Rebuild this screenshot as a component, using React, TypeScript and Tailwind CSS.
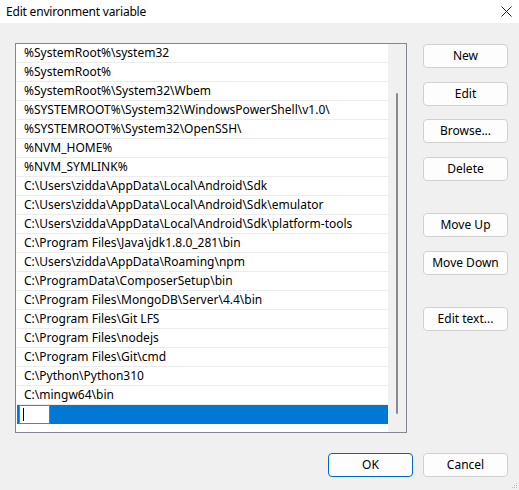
import React from "react";

const items = [
  "%SystemRoot%\\system32",
  "%SystemRoot%",
  "%SystemRoot%\\System32\\Wbem",
  "%SYSTEMROOT%\\System32\\WindowsPowerShell\\v1.0\\",
  "%SYSTEMROOT%\\System32\\OpenSSH\\",
  "%NVM_HOME%",
  "%NVM_SYMLINK%",
  "C:\\Users\\zidda\\AppData\\Local\\Android\\Sdk",
  "C:\\Users\\zidda\\AppData\\Local\\Android\\Sdk\\emulator",
  "C:\\Users\\zidda\\AppData\\Local\\Android\\Sdk\\platform-tools",
  "C:\\Program Files\\Java\\jdk1.8.0_281\\bin",
  "C:\\Users\\zidda\\AppData\\Roaming\\npm",
  "C:\\ProgramData\\ComposerSetup\\bin",
  "C:\\Program Files\\MongoDB\\Server\\4.4\\bin",
  "C:\\Program Files\\Git LFS",
  "C:\\Program Files\\nodejs",
  "C:\\Program Files\\Git\\cmd",
  "C:\\Python\\Python310",
  "C:\\mingw64\\bin",
];

function Btn({ label, className = "" }: { label: string; className?: string }) {
  return (
    <div
      className={
        "w-[85px] h-[24px] rounded-[4px] border bg-[#fdfdfd] flex items-center justify-center text-[12px] text-black " +
        className
      }
    >
      {label}
    </div>
  );
}

export default function App() {
  return (
    <div
      className="w-[519px] h-[490px] bg-[#f0f0f0] flex flex-col relative overflow-hidden"
      style={{ fontFamily: '"Segoe UI", "Noto Sans", sans-serif' }}
    >
      <div className="h-[23px] bg-white flex items-center justify-between pl-[6px] pr-[6px] shrink-0">
        <span className="text-[12px] text-black tracking-[-0.2px]">Edit environment variable</span>
        <svg width="11" height="11" viewBox="0 0 11 11" className="mr-[1px]">
          <path d="M0.5 0.5 L10.5 10.5 M10.5 0.5 L0.5 10.5" stroke="#222" strokeWidth="1" />
        </svg>
      </div>
      <div className="flex pl-[15px] pt-[20px]">
        <div className="w-[392px] h-[390px] border border-[#828790] bg-white flex">
          <div className="flex-1 flex flex-col pl-[1px] pt-0">
            {items.map((t) => (
              <div
                key={t}
                className="h-[19px] border-b border-[#ececec] flex items-center pl-[7px] text-[12px] text-black whitespace-nowrap"
              >
                {t}
              </div>
            ))}
            <div className="h-[19px] bg-[#0078d4] flex items-center pl-[2px]">
              <div className="w-[31px] h-[19px] bg-white border border-[#7a7a7a] flex items-center pl-[3px]">
                <div className="w-[1px] h-[13px] bg-black" />
              </div>
            </div>
          </div>
          <div className="w-[18px] bg-[#f0f0f0] flex justify-center pt-[49px]">
            <div className="w-[2px] h-[321px] bg-[#8a8a8a] rounded-full" />
          </div>
        </div>
        <div className="flex flex-col ml-[16px] pt-[1px]">
          <Btn label="New" className="border-[#d0d0d0]" />
          <Btn label="Edit" className="mt-[14px] border-[#d0d0d0]" />
          <Btn label="Browse..." className="mt-[13px] border-[#d0d0d0]" />
          <Btn label="Delete" className="mt-[14px] border-[#d0d0d0]" />
          <Btn label="Move Up" className="mt-[32px] border-[#d0d0d0]" />
          <Btn label="Move Down" className="mt-[14px] border-[#d0d0d0]" />
          <Btn label="Edit text..." className="mt-[32px] border-[#d0d0d0]" />
        </div>
      </div>
      <div className="flex justify-end pr-[11px] pt-[20px] gap-[10px]">
        <Btn label="OK" className="border-[#0067c0]" />
        <Btn label="Cancel" className="border-[#d0d0d0]" />
      </div>
      <div className="absolute right-[2px] bottom-[2px] grid grid-cols-3 gap-[1px]">
        <div />
        <div />
        <div className="w-[1px] h-[1px] bg-[#bbb]" />
        <div />
        <div className="w-[1px] h-[1px] bg-[#bbb]" />
        <div className="w-[1px] h-[1px] bg-[#bbb]" />
        <div className="w-[1px] h-[1px] bg-[#bbb]" />
        <div className="w-[1px] h-[1px] bg-[#bbb]" />
        <div className="w-[1px] h-[1px] bg-[#bbb]" />
      </div>
    </div>
  );
}
